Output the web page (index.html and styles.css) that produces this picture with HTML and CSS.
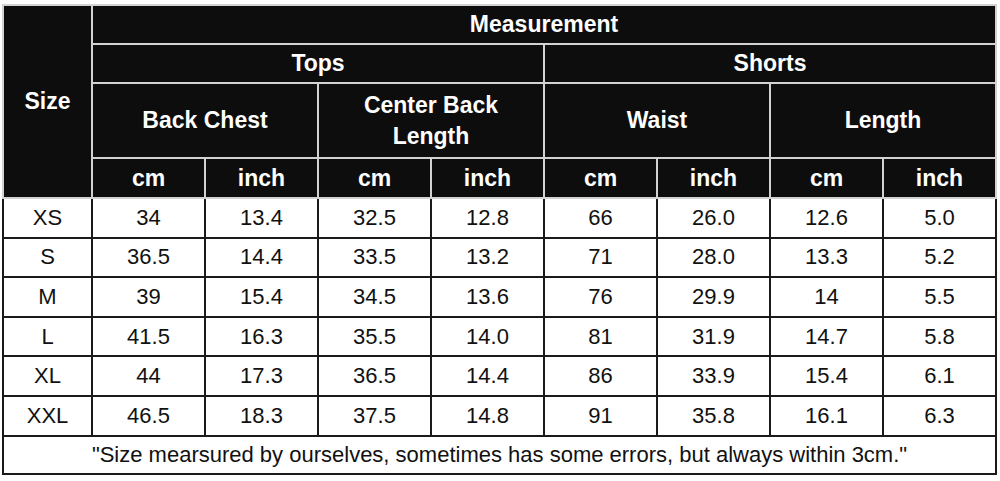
FILE: index.html
```html
<!DOCTYPE html>
<html lang="en">

<head>
    <meta charset="UTF-8">
    <meta name="viewport" content="width=device-width, initial-scale=1.0">
    <title>Size Chart</title>
    <link rel="stylesheet" href="styles.css">
</head>

<body>
    <table class="chart">
        <colgroup>
            <col class="col-size">
            <col><col><col><col><col><col><col><col>
        </colgroup>
        <thead>
            <tr class="h1">
                <th rowspan="4">Size</th>
                <th colspan="8">Measurement</th>
            </tr>
            <tr class="h2">
                <th colspan="4">Tops</th>
                <th colspan="4">Shorts</th>
            </tr>
            <tr class="h3">
                <th colspan="2">Back Chest</th>
                <th colspan="2">Center Back<br>Length</th>
                <th colspan="2">Waist</th>
                <th colspan="2">Length</th>
            </tr>
            <tr class="h4">
                <th>cm</th><th>inch</th>
                <th>cm</th><th>inch</th>
                <th>cm</th><th>inch</th>
                <th>cm</th><th>inch</th>
            </tr>
        </thead>
        <tbody>
            <tr><td>XS</td><td>34</td><td>13.4</td><td>32.5</td><td>12.8</td><td>66</td><td>26.0</td><td>12.6</td><td>5.0</td></tr>
            <tr><td>S</td><td>36.5</td><td>14.4</td><td>33.5</td><td>13.2</td><td>71</td><td>28.0</td><td>13.3</td><td>5.2</td></tr>
            <tr><td>M</td><td>39</td><td>15.4</td><td>34.5</td><td>13.6</td><td>76</td><td>29.9</td><td>14</td><td>5.5</td></tr>
            <tr><td>L</td><td>41.5</td><td>16.3</td><td>35.5</td><td>14.0</td><td>81</td><td>31.9</td><td>14.7</td><td>5.8</td></tr>
            <tr><td>XL</td><td>44</td><td>17.3</td><td>36.5</td><td>14.4</td><td>86</td><td>33.9</td><td>15.4</td><td>6.1</td></tr>
            <tr><td>XXL</td><td>46.5</td><td>18.3</td><td>37.5</td><td>14.8</td><td>91</td><td>35.8</td><td>16.1</td><td>6.3</td></tr>
            <tr class="note"><td colspan="9">"Size mearsured by ourselves, sometimes has some errors, but always within 3cm."</td></tr>
        </tbody>
    </table>
</body>

</html>
```

FILE: styles.css
```css
body{
    margin: 0;
    background-color: #fff;
    font-family: "Liberation Sans", Arial, sans-serif;
}
.chart{
    margin: 4px 0 0 2px;
    width: 995px;
    table-layout: fixed;
    border-collapse: collapse;
}
.col-size{
    width: 89px;
}
.chart th{
    background-color: #0d0d0d;
    color: #fff;
    font-size: 23px;
    font-weight: bold;
    border: 2px solid #d2d2d2;
    text-align: center;
    padding: 0;
    line-height: 31px;
}
.chart td{
    border: 2px solid #1a1a1a;
    color: #111;
    font-size: 22px;
    text-align: center;
    padding: 0;
    height: 37.6px;
}
.h1 th, .h2 th{
    height: 37px;
}
.h3 th{
    height: 73px;
}
.h4 th{
    height: 38px;
}
.chart .note td{
    height: 36px;
    font-size: 22px;
}
```
